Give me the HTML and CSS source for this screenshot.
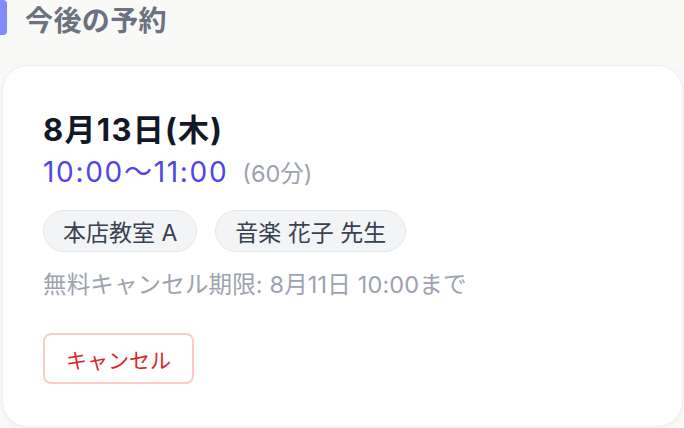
FILE: index.html
```html
<!DOCTYPE html>
<html lang="ja">
<head>
<meta charset="utf-8">
<link rel="stylesheet" href="styles.css">
</head>
<body>
<div class="page">
  <div class="section-head">
    <span class="bar"></span>
    <h2 class="title">今後の予約</h2>
  </div>
  <div class="card">
    <div class="date">8月13日(木)</div>
    <div class="time-row">
      <span class="time">10:00〜11:00</span>
      <span class="duration">(60分)</span>
    </div>
    <div class="chips">
      <span class="chip">本店教室 A</span>
      <span class="chip">音楽 花子 先生</span>
    </div>
    <div class="deadline">無料キャンセル期限: 8月11日 10:00まで</div>
    <div class="actions">
      <button class="cancel">キャンセル</button>
    </div>
  </div>
</div>
</body>
</html>
```

FILE: styles.css
```css
html, body {
  margin: 0;
  padding: 0;
  background: #f9f9f7;
}
body {
  font-family: Inter, "Noto Sans CJK JP", sans-serif;
  width: 684px;
  height: 428px;
  overflow: hidden;
}
.page {
  display: flex;
  flex-direction: column;
}
.section-head {
  display: flex;
  align-items: center;
  gap: 18px;
  height: 40px;
}
.bar {
  width: 7px;
  height: 35px;
  margin-top: -5px;
  background: #818cf8;
  border-radius: 0 4px 4px 0;
}
.title {
  margin: 0;
  font-family: "Noto Sans CJK JP", sans-serif;
  font-size: 28px;
  font-weight: 700;
  letter-spacing: 0.4px;
  color: #6b7280;
  line-height: 40px;
  margin-top: -2px;
}
.card {
  margin: 25px 1px 0 2px;
  background: #ffffff;
  border: 1.5px solid #efefef;
  border-radius: 26px;
  box-shadow: 0 2px 6px rgba(0,0,0,0.04);
  padding: 45px 40px 40px 40px;
  display: flex;
  flex-direction: column;
  height: 362px;
  box-sizing: border-box;
}
.date {
  font-size: 31px;
  font-weight: 700;
  color: #111827;
  line-height: 38px;
  letter-spacing: 1.3px;
}
.time-row {
  display: flex;
  align-items: baseline;
  gap: 14px;
  margin-top: 6px;
}
.time {
  font-size: 28px;
  color: #4f46e5;
  line-height: 34px;
  letter-spacing: 1.7px;
}
.duration {
  font-size: 23.5px;
  color: #9ca3af;
}
.chips {
  display: flex;
  gap: 18px;
  margin-top: 21px;
}
.chip {
  display: inline-flex;
  align-items: center;
  height: 42px;
  box-sizing: border-box;
  padding: 0 19px;
  border: 1.5px solid #e5e7eb;
  background: #f3f4f6;
  border-radius: 21px;
  font-size: 23px;
  color: #374151;
}
.deadline {
  margin-top: 18px;
  font-size: 23.5px;
  color: #9ca3af;
  line-height: 30px;
  letter-spacing: 0.15px;
}
.actions {
  margin-top: 33px;
  display: flex;
}
.cancel {
  height: 51px;
  box-sizing: border-box;
  padding: 0 21px;
  background: #ffffff;
  border: 2px solid #fecaca;
  border-radius: 8px;
  font-family: "Noto Sans CJK JP", sans-serif;
  font-size: 21px;
  color: #dc2626;
}
```
